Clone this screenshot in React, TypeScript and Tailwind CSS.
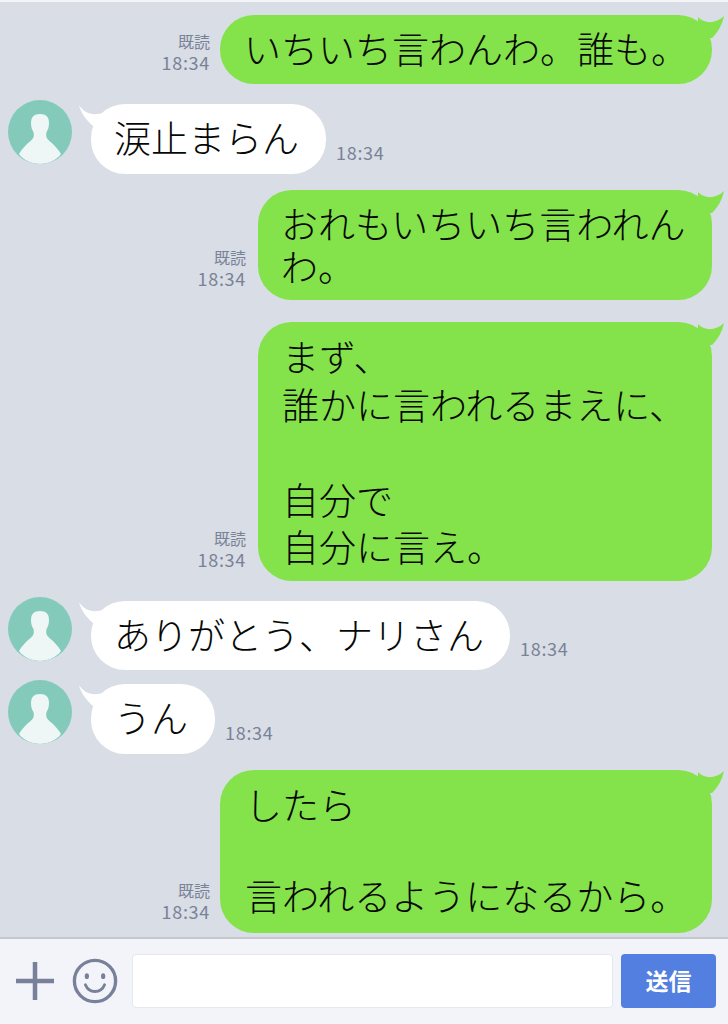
import React from 'react';

const FONT = 'font-["Noto_Sans_CJK_JP","Liberation_Sans",sans-serif]';

interface Message {
  id: number;
  mine: boolean;
  lines: string[];
  width: string;
  height: string;
  leading: string;
  pad: string;
  top: string;
  metaGap?: string;
}

const messages: Message[] = [
  { id: 1, mine: true, lines: ['いちいち言わんわ。誰も。'], width: 'w-[492px]', height: 'h-[69px]', leading: 'leading-[66px]', pad: 'pl-[24px]', top: 'mt-[13px]', metaGap: 'mr-[10px]' },
  { id: 2, mine: false, lines: ['涙止まらん'], width: 'w-[235px]', height: 'h-[70px]', leading: 'leading-[67px]', pad: 'pl-[23px]', top: 'mt-[20px]' },
  { id: 3, mine: true, lines: ['おれもいちいち言われん', 'わ。'], width: 'w-[454px]', height: 'h-[110px]', leading: 'leading-[43px]', pad: 'pl-[23px] pt-[12px]', top: 'mt-[16px]', metaGap: 'mr-[12px]' },
  { id: 4, mine: true, lines: ['まず、', '誰かに言われるまえに、', '', '自分で', '自分に言え。'], width: 'w-[454px]', height: 'h-[259px]', leading: 'leading-[47.5px]', pad: 'pl-[24px] pt-[11px]', top: 'mt-[22px]', metaGap: 'mr-[12px]' },
  { id: 5, mine: false, lines: ['ありがとう、ナリさん'], width: 'w-[419px]', height: 'h-[69px]', leading: 'leading-[66px]', pad: 'pl-[23px]', top: 'mt-[20px]' },
  { id: 6, mine: false, lines: ['うん'], width: 'w-[124px]', height: 'h-[70px]', leading: 'leading-[67px]', pad: 'pl-[23px]', top: 'mt-[14px]' },
  { id: 7, mine: true, lines: ['したら', '', '言われるようになるから。'], width: 'w-[492px]', height: 'h-[163px]', leading: 'leading-[45.5px]', pad: 'pl-[25px] pt-[12px]', top: 'mt-[16px]', metaGap: 'mr-[10px]' },
];

const Avatar = () => (
  <svg width="64" height="64" viewBox="0 0 64 64" className="shrink-0">
    <defs>
      <clipPath id="avatar-clip">
        <circle cx="32" cy="32" r="32" />
      </clipPath>
    </defs>
    <g clipPath="url(#avatar-clip)">
      <rect width="64" height="64" fill="#84cabb" />
      <path
        d="M32 14c-6 0-9 3-9 9 0 4 1 7 2.500 9 .5 3 .5 5-1 7-2 2.500-8 6-13.500 15 4 6 13 10 21 10s17-4 21-10c-5.500-9-11.500-12.500-13.500-15-1.500-2-1.500-4-1-7 1.500-2 2.500-5 2.500-9 0-6-3-9-9-9z"
        fill="#eef7f5"
      />
    </g>
  </svg>
);

const Bubble = ({ message }: { message: Message }) => (
  <div
    className={`relative shrink-0 rounded-[34px] text-[37px] font-light text-[#060806] whitespace-nowrap ${message.width} ${message.height} ${message.leading} ${message.pad} ${message.mine ? 'bg-[#84e24a]' : 'bg-white'}`}
  >
    {message.mine ? (
      <svg width="36" height="32" viewBox="0 0 36 32" className="absolute top-[-1px] right-[-12px]">
        <path d="M10 3C16 10 28 10 36 2 34 11 30 18 24 24L10 24z" fill="#84e24a" />
      </svg>
    ) : (
      <svg width="36" height="32" viewBox="0 0 36 32" className="absolute top-[0px] left-[-12px]">
        <path d="M0 1C5 9 14 13 26 8L24 26 14 22C7 16 2 9 0 1z" fill="#ffffff" />
      </svg>
    )}
    <div className="relative">
      {message.lines.map((line, i) => (
        <div key={i}>{line || '\u00a0'}</div>
      ))}
    </div>
  </div>
);

const Row = ({ message }: { message: Message }) => {
  if (message.mine) {
    return (
      <div className={`flex justify-end items-end pr-4 ${message.top}`}>
        <div className={`mb-[11px] text-right text-[#7a8296] ${message.metaGap}`}>
          <div className="text-[16px] leading-[21px]">既読</div>
          <div className="text-[18px] tracking-[0.7px] leading-[21px]">18:34</div>
        </div>
        <Bubble message={message} />
      </div>
    );
  }
  return (
    <div className={`flex items-start pl-2 ${message.top}`}>
      <div className="mt-[-4px] mr-[19px]">
        <Avatar />
      </div>
      <Bubble message={message} />
      <div className="self-end ml-[10px] mb-[11px] text-[18px] tracking-[0.7px] leading-[21px] text-[#7a8296]">18:34</div>
    </div>
  );
};

export default function App() {
  return (
    <div className={`w-[728px] h-[1024px] flex flex-col overflow-hidden bg-[#d8dde6] ${FONT}`}>
      <div className="h-[2px] bg-[#f4f5f8]" />
      <div className="flex-1">
        {messages.map(m => (
          <Row key={m.id} message={m} />
        ))}
      </div>
      <div className="h-[87px] flex items-center bg-[#f3f4f9] border-t-2 border-[#c6c8d0] pl-[16px] pb-[2px]">
        <svg width="38" height="38" viewBox="0 0 38 38" className="shrink-0">
          <path d="M19 0v38M0 19h38" stroke="#78809a" strokeWidth="4.500" />
        </svg>
        <svg width="46" height="46" viewBox="0 0 48 48" className="ml-[18px] shrink-0">
          <circle cx="24" cy="24" r="21.500" fill="none" stroke="#78809a" strokeWidth="3.500" />
          <ellipse cx="15.500" cy="19" rx="2.200" ry="3" fill="#78809a" />
          <ellipse cx="32.500" cy="19" rx="2.200" ry="3" fill="#78809a" />
          <path d="M14 28c2 5 6 7 10 7s8-2 10-7" fill="none" stroke="#78809a" strokeWidth="3" strokeLinecap="round" />
        </svg>
        <div className="ml-[14px] w-[481px] h-[54px] shrink-0 bg-white rounded border border-[#e6e8ee]" />
        <div className="ml-[8px] w-[95px] h-[54px] shrink-0 rounded bg-[#537fe0] text-white text-[23px] font-bold flex items-center justify-center">
          送信
        </div>
      </div>
    </div>
  );
}
